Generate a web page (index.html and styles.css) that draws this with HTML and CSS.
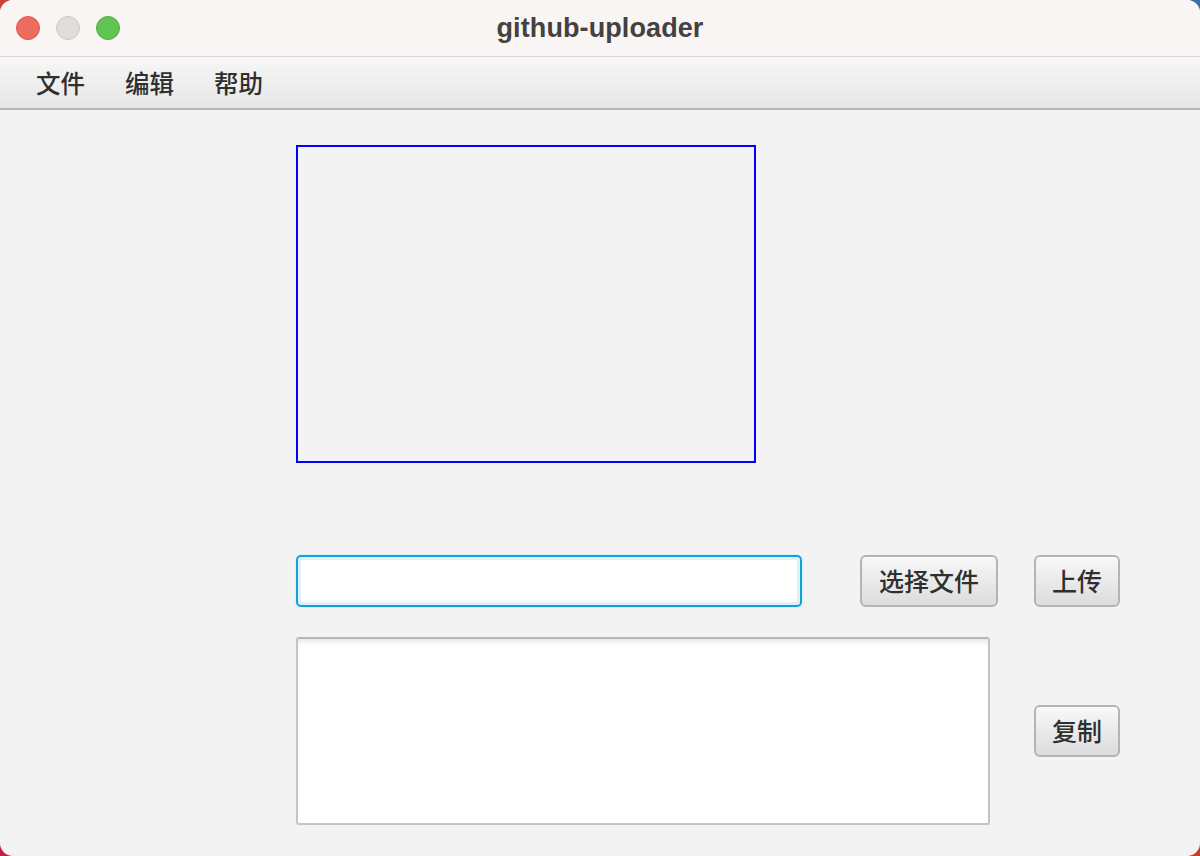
FILE: index.html
```html
<!DOCTYPE html>
<html lang="zh">
<head>
<meta charset="utf-8">
<title>github-uploader</title>
<link rel="stylesheet" href="styles.css">
</head>
<body>
<div class="window">
  <header class="titlebar">
    <div class="lights">
      <span class="light red"></span>
      <span class="light gray"></span>
      <span class="light green"></span>
    </div>
    <div class="title">github-uploader</div>
  </header>
  <nav class="menubar">
    <span class="menu-item">文件</span>
    <span class="menu-item">编辑</span>
    <span class="menu-item">帮助</span>
  </nav>
  <main class="content">
    <div class="preview"></div>
    <div class="form">
      <input class="path-field" type="text">
      <button class="btn btn-choose">选择文件</button>
      <button class="btn btn-upload">上传</button>
      <textarea class="result"></textarea>
      <button class="btn btn-copy">复制</button>
    </div>
  </main>
</div>
</body>
</html>
```

FILE: styles.css
```css
html, body {
  margin: 0;
  padding: 0;
  width: 1200px;
  height: 856px;
  overflow: hidden;
}
body {
  background:
    linear-gradient(to right, #c8443a 0%, #c8443a 50%, #3a6ea5 50%, #3a6ea5 100%) top / 100% 50% no-repeat,
    linear-gradient(to right, #c21f45 0%, #c21f45 50%, #c43a2c 50%, #c43a2c 100%) bottom / 100% 50% no-repeat;
  font-family: "Noto Sans CJK SC", "Noto Sans", sans-serif;
}
.window {
  width: 1200px;
  height: 856px;
  border-radius: 13px;
  overflow: hidden;
  background: #f3f3f3;
  display: flex;
  flex-direction: column;
}
.titlebar {
  height: 56px;
  flex: none;
  background: #f9f5f4;
  border-bottom: 1px solid #d9d7d6;
  position: relative;
  display: flex;
  align-items: center;
  justify-content: center;
}
.lights {
  position: absolute;
  left: 16px;
  top: 16px;
  display: flex;
  gap: 16px;
}
.light {
  width: 24px;
  height: 24px;
  border-radius: 50%;
  box-sizing: border-box;
}
.light.red { background: #ee6b60; border: 1px solid #d9574c; }
.light.gray { background: #dfdcdb; border: 1px solid #c9c6c5; }
.light.green { background: #61c554; border: 1px solid #4fae43; }
.title {
  font-family: "Liberation Sans", Arial, sans-serif;
  font-weight: bold;
  font-size: 27px;
  color: #444141;
  letter-spacing: 0.1px;
  margin-top: 0;
}
.menubar {
  height: 51px;
  flex: none;
  background: linear-gradient(to bottom, #f7f7f7, #e6e6e6);
  border-bottom: 2px solid #b6b6b6;
  display: flex;
  align-items: center;
  padding-left: 36px;
  gap: 40px;
}
.menu-item {
  font-size: 24.5px;
  font-weight: 500;
  color: #2f2f2f;
  line-height: 1;
  margin-top: 1px;
}
.content {
  flex: 1;
  padding: 35px 0 0 296px;
}
.preview {
  width: 460px;
  height: 318px;
  box-sizing: border-box;
  border: 2px solid #0000ff;
}
.form {
  margin-top: 92px;
  display: grid;
  grid-template-columns: 506px 58px 138px 36px 86px;
  grid-template-rows: 52px 188px;
  row-gap: 30px;
}
.path-field {
  grid-column: 1;
  grid-row: 1;
  box-sizing: border-box;
  width: 506px;
  height: 52px;
  margin: 0;
  border: 2px solid #10a2d9;
  border-radius: 5px;
  background: #fff;
  box-shadow: inset 0 0 0 3px #def1f9, 0 0 0 1px #d8eef8;
  outline: none;
  font-size: 22px;
  font-family: inherit;
}
.btn {
  box-sizing: border-box;
  height: 52px;
  margin: 0;
  padding: 0 0 2px;
  border: 2px solid #b4b4b4;
  border-radius: 6px;
  background: linear-gradient(to bottom, #f8f8f8, #dcdcdc);
  box-shadow: inset 0 1px 0 #ffffff;
  font-family: "Noto Sans CJK SC", "Noto Sans", sans-serif;
  font-size: 25px;
  font-weight: 500;
  color: #2f2f2f;
  line-height: 1;
}
.btn-choose { grid-column: 3; grid-row: 1; width: 138px; }
.btn-upload { grid-column: 5; grid-row: 1; width: 86px; }
.btn-copy { grid-column: 5; grid-row: 2; width: 86px; align-self: center; }
.result {
  grid-column: 1 / 4;
  grid-row: 2;
  width: 694px;
  height: 188px;
  box-sizing: border-box;
  margin: 0;
  border: 2px solid #c4c4c4;
  border-top-color: #b8b8b8;
  border-radius: 3px;
  background: #fff;
  box-shadow: inset 0 6px 6px -4px rgba(0,0,0,0.12);
  resize: none;
  outline: none;
}
```
